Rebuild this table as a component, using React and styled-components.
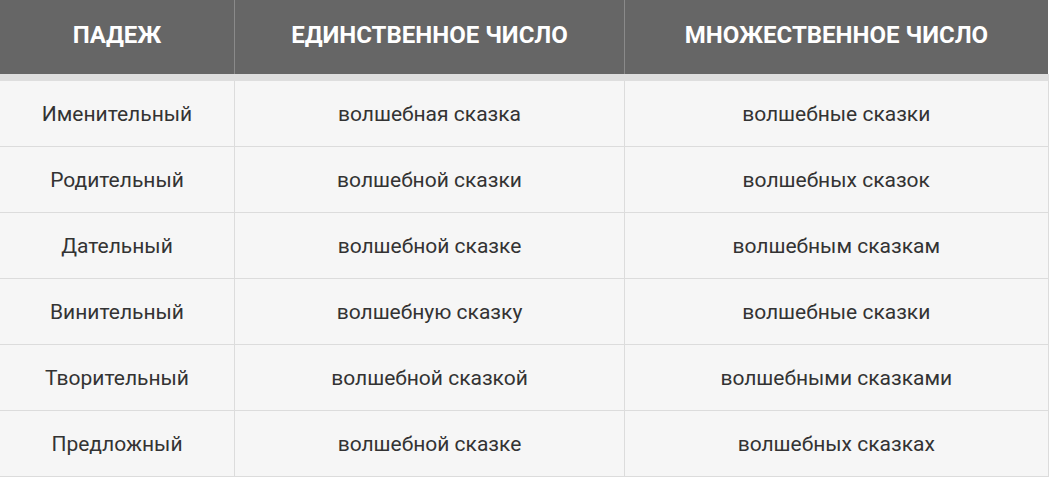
import React from 'react';
import styled, { createGlobalStyle } from 'styled-components';

const GlobalStyle = createGlobalStyle`
  html, body {
    margin: 0;
    padding: 0;
    background: #fff;
    font-family: Roboto, "Liberation Sans", sans-serif;
  }
`;

const Table = styled.table`
  width: 1046px;
  border-collapse: collapse;
  table-layout: fixed;
  font-family: Roboto, "Liberation Sans", sans-serif;
`;

const HeadCell = styled.th`
  width: ${(p) => p.$width}px;
  height: 70px;
  padding: 0 0 4px;
  background: #666666;
  color: #ffffff;
  font-size: 24px;
  font-weight: 700;
  text-transform: uppercase;
  text-align: center;
  border-left: 1px solid #8a8a8a;
  border-bottom: 7px solid #dedede;

  &:first-child {
    border-left: none;
  }
`;

const Row = styled.tr`
  background: #f6f6f6;
`;

const Cell = styled.td`
  height: 65px;
  padding: 0;
  text-align: center;
  font-size: 21px;
  color: #333333;
  border: 1px solid #dcdcdc;
  border-top: none;

  &:first-child {
    border-left: none;
  }
`;

const columns = [
  { title: 'Падеж', width: 234 },
  { title: 'Единственное число', width: 389 },
  { title: 'Множественное число', width: 423 },
];

const rows = [
  ['Именительный', 'волшебная сказка', 'волшебные сказки'],
  ['Родительный', 'волшебной сказки', 'волшебных сказок'],
  ['Дательный', 'волшебной сказке', 'волшебным сказкам'],
  ['Винительный', 'волшебную сказку', 'волшебные сказки'],
  ['Творительный', 'волшебной сказкой', 'волшебными сказками'],
  ['Предложный', 'волшебной сказке', 'волшебных сказках'],
];

const App = () => (
  <>
    <GlobalStyle />
    <Table>
      <thead>
        <tr>
          {columns.map((c) => (
            <HeadCell key={c.title} $width={c.width}>
              {c.title}
            </HeadCell>
          ))}
        </tr>
      </thead>
      <tbody>
        {rows.map((r) => (
          <Row key={r[0]}>
            {r.map((text, i) => (
              <Cell key={i}>{text}</Cell>
            ))}
          </Row>
        ))}
      </tbody>
    </Table>
  </>
);

export default App;
